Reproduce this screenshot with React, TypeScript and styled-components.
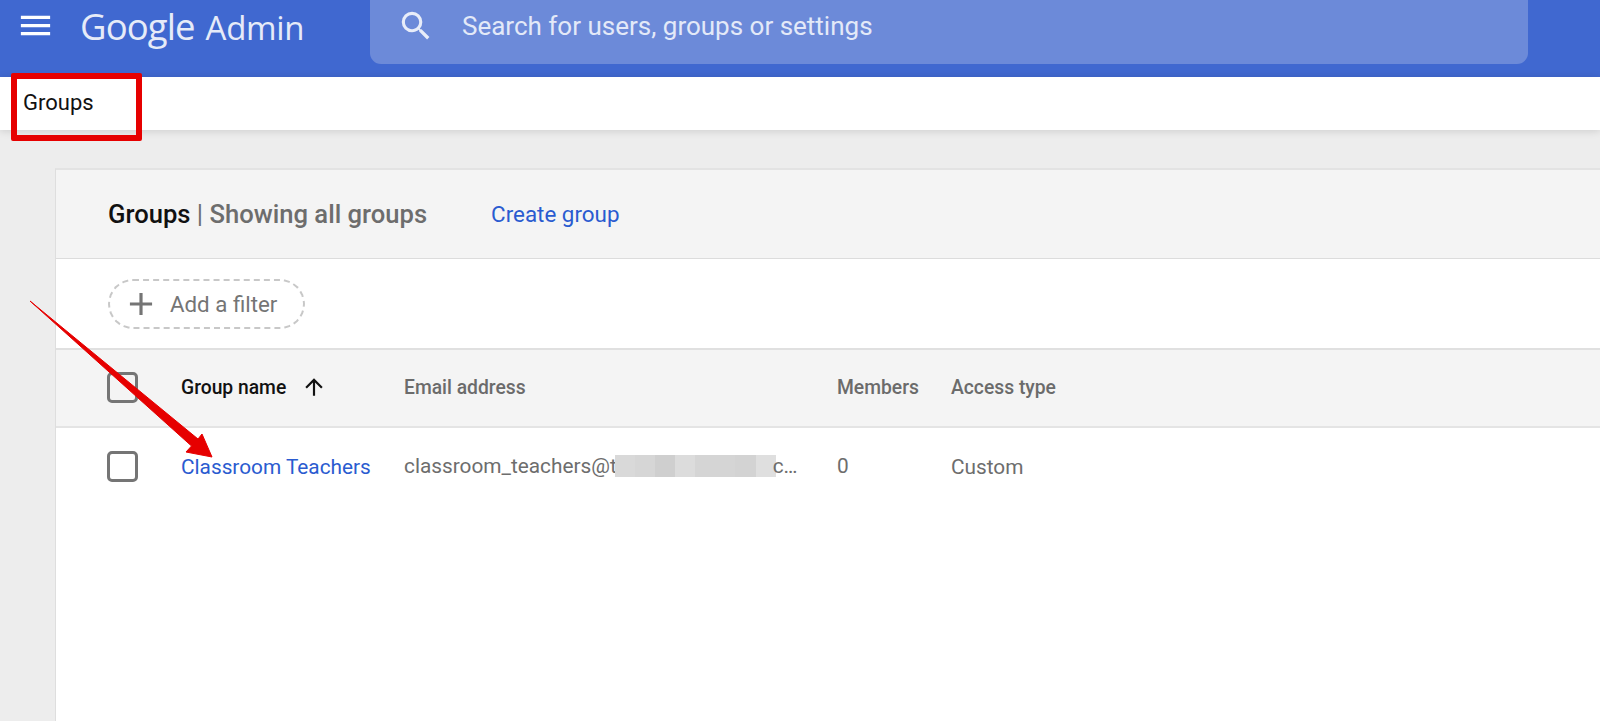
import React from 'react';
import styled, { createGlobalStyle } from 'styled-components';
import { MdAdd, MdArrowUpward, MdMenu, MdSearch } from 'react-icons/md';

const BLUR_SHADES = ['#d9d9d9', '#d6d6d6', '#cfcfcf', '#dcdcdc', '#d5d5d5', '#d5d5d5', '#d3d3d3', '#dfdfdf'];

const App: React.FC = () => {
  return (
    <Page>
      <GlobalStyle />
      <TopBar>
        <MenuButton>
          <MdMenu size={39} />
        </MenuButton>
        <Logo>
          <LogoGoogle>Google</LogoGoogle>
          Admin
        </Logo>
        <SearchBox>
          <MdSearch size={38} />
          <SearchText>Search for users, groups or settings</SearchText>
        </SearchBox>
      </TopBar>
      <SubBar>Groups</SubBar>
      <Content>
        <Card>
          <CardHead>
            <Title>
              Groups <TitleMuted><Pipe>|</Pipe> Showing all groups</TitleMuted>
            </Title>
            <CreateLink>Create group</CreateLink>
          </CardHead>
          <FilterRow>
            <FilterPill>
              <MdAdd size={38} />
              <span>Add a filter</span>
            </FilterPill>
          </FilterRow>
          <HeadRow>
            <Checkbox />
            <SortHeader>
              Group name
              <MdArrowUpward size={26} />
            </SortHeader>
            <HeadCell>Email address</HeadCell>
            <HeadCell>Members</HeadCell>
            <HeadCell>Access type</HeadCell>
          </HeadRow>
          <BodyRow>
            <Checkbox />
            <GroupLink>Classroom Teachers</GroupLink>
            <BodyCell>
              classroom_teachers@t
              <Blur>
                {BLUR_SHADES.map((shade, i) => (
                  <BlurBlock key={i} $shade={shade} />
                ))}
              </Blur>
              c…
            </BodyCell>
            <BodyCell>0</BodyCell>
            <AccessCell>Custom</AccessCell>
          </BodyRow>
        </Card>
      </Content>
      <Highlight />
      <Arrow viewBox="0 0 1600 721">
        <polygon
          points="30,301 198,439 202,434 212,457 186,452 191.5,446"
          fill="#e60000"
          stroke="#e60000"
          strokeWidth="1"
          strokeLinejoin="round"
        />
      </Arrow>
    </Page>
  );
};

export default App;

const GlobalStyle = createGlobalStyle`
  html, body {
    margin: 0;
    padding: 0;
    background: #ededed;
  }

  body {
    font-family: Roboto, "Liberation Sans", sans-serif;
  }
`;

const Page = styled.div`
  position: relative;
  display: flex;
  flex-direction: column;
  width: 1600px;
  height: 721px;
  overflow: hidden;
`;

const TopBar = styled.header`
  display: flex;
  align-items: flex-start;
  height: 77px;
  flex-shrink: 0;
  background: #4068d0;
  color: #e8edf9;
`;

const MenuButton = styled.div`
  display: flex;
  width: 39px;
  height: 39px;
  margin: 6px 0 0 16px;
  color: #fff;
`;

const Logo = styled.div`
  display: flex;
  align-items: baseline;
  gap: 11px;
  width: 290px;
  margin: 3px 0 0 25px;
  font-family: "Open Sans", sans-serif;
  font-size: 33px;
  line-height: 46px;
  letter-spacing: -0.3px;
  color: #e6ebf8;
`;

const LogoGoogle = styled.span`
  font-size: 36.5px;
  letter-spacing: -0.9px;
`;

const SearchBox = styled.div`
  display: flex;
  align-items: center;
  gap: 27px;
  width: 1158px;
  height: 64px;
  padding: 0 0 13px 27px;
  box-sizing: border-box;
  background: #6c8ad9;
  border-radius: 0 0 11px 11px;
`;

const SearchText = styled.span`
  font-size: 26px;
  color: #e3e9f8;
`;

const SubBar = styled.div`
  position: relative;
  height: 53px;
  flex-shrink: 0;
  padding-left: 23px;
  background: #fff;
  font-size: 22px;
  line-height: 52px;
  color: #111;
  box-shadow: 0 1px 8px rgba(0, 0, 0, 0.14);
`;

const Content = styled.main`
  flex: 1;
  padding: 38px 0 0 55px;
`;

const Card = styled.section`
  height: 100%;
  background: #fff;
  border-top: 2px solid #e3e3e3;
  border-left: 1px solid #dedede;
`;

const CardHead = styled.div`
  display: flex;
  align-items: center;
  gap: 64px;
  height: 88px;
  padding-left: 52px;
  background: #f4f4f4;
  border-bottom: 1px solid #dcdcdc;
`;

const Title = styled.div`
  font-size: 25.6px;
  font-weight: 500;
  color: #111;
`;

const TitleMuted = styled.span`
  color: #6d6d6d;
`;

const Pipe = styled.span`
  font-weight: 400;
`;

const CreateLink = styled.a`
  font-size: 22.4px;
  color: #2a5bd0;
`;

const FilterRow = styled.div`
  display: flex;
  align-items: center;
  height: 89px;
  padding-left: 52px;
  box-sizing: border-box;
`;

const FilterPill = styled.div`
  display: flex;
  align-items: center;
  gap: 10px;
  width: 197px;
  height: 50px;
  padding-left: 12px;
  box-sizing: border-box;
  border: 2px dashed #c8c8c8;
  border-radius: 25px;
  font-size: 22.3px;
  color: #757575;
`;

const tableColumns = `
  display: grid;
  grid-template-columns: 74px 223px 433px 114px 1fr;
  align-items: center;
  padding-left: 51px;
`;

const HeadRow = styled.div`
  ${tableColumns}
  height: 80px;
  padding-bottom: 2px;
  background: #f4f4f4;
  border-top: 2px solid #e0e0e0;
  border-bottom: 2px solid #e4e4e4;
  box-sizing: border-box;
`;

const BodyRow = styled.div`
  ${tableColumns}
  height: 76px;
`;

const Checkbox = styled.div`
  width: 31px;
  height: 31px;
  box-sizing: border-box;
  border: 3px solid #757575;
  border-radius: 5px;
`;

const HeadCell = styled.div`
  font-size: 19.3px;
  font-weight: 500;
  color: #6b6b6b;
`;

const SortHeader = styled(HeadCell)`
  display: flex;
  align-items: center;
  gap: 15px;
  color: #111;
`;

const GroupLink = styled.a`
  padding-top: 2px;
  font-size: 20.8px;
  color: #2a5bd0;
`;

const BodyCell = styled.div`
  display: flex;
  align-items: center;
  font-size: 20.8px;
  color: #6d6d6d;
  white-space: nowrap;
`;

const AccessCell = styled(BodyCell)`
  padding-top: 2px;
`;

const Blur = styled.span`
  display: flex;
  width: 161px;
  height: 22px;
  margin: 0 -3px 0 -2px;
`;

const BlurBlock = styled.span<{ $shade: string }>`
  flex: 1;
  background: ${(p) => p.$shade};
`;

const Highlight = styled.div`
  position: absolute;
  left: 11px;
  top: 73px;
  width: 131px;
  height: 68px;
  box-sizing: border-box;
  border: 6px solid #e60000;
  border-radius: 2px;
`;

const Arrow = styled.svg`
  position: absolute;
  left: 0;
  top: 0;
  width: 1600px;
  height: 721px;
  pointer-events: none;
`;
